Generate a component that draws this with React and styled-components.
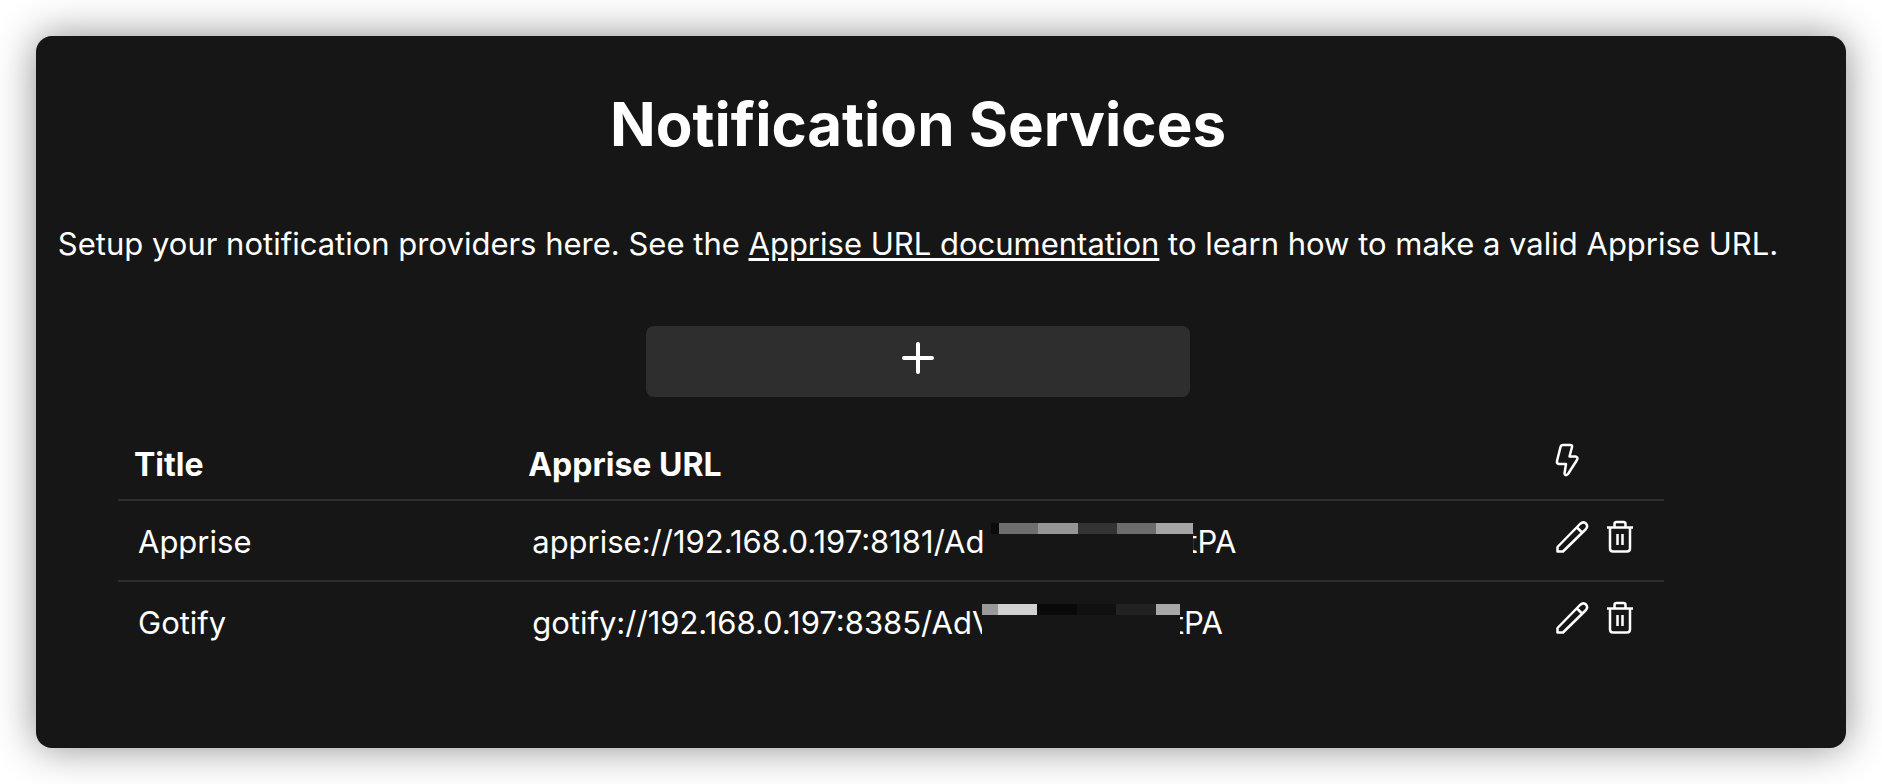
import React from "react";
import styled, { createGlobalStyle } from "styled-components";

const Global = createGlobalStyle`
  * { box-sizing: border-box; }
  body { margin: 0; background: #fff; color: #fff; font-family: Inter, "Liberation Sans", sans-serif; }
`;
const Page = styled.div`
  min-height: 100vh;
  padding: 36px;
  display: flex;
`;
const Card = styled.main`
  flex: 1;
  min-width: 0;
  background: #161616;
  border-radius: 16px;
  box-shadow: 0 0 40px rgba(0, 0, 0, 0.45);
  padding: 48px 46px 64px 0;
  display: flex;
  flex-direction: column;
  align-items: center;
`;
const Heading = styled.h1`
  margin: 0;
  font-size: 60px;
  line-height: 80px;
  font-weight: 700;
`;
const Intro = styled.p`
  margin: 60px 0 0;
  font-size: 31px;
  line-height: 40px;
  text-align: center;
`;
const DocLink = styled.a`
  color: inherit;
  text-decoration: underline;
  text-decoration-thickness: 3px;
  text-underline-offset: 3px;
`;
const AddButton = styled.button`
  margin-top: 62px;
  width: 544px;
  max-width: 100%;
  height: 71px;
  padding: 0 0 8px;
  border: 0;
  border-radius: 8px;
  background: #2e2e2e;
  color: #fff;
  display: flex;
  align-items: center;
  justify-content: center;
`;
const Table = styled.table`
  align-self: flex-start;
  margin: 27px 0 0 82px;
  width: calc(100% - 218px);
  border-collapse: collapse;
  table-layout: fixed;
  font-size: 31px;
  line-height: 40px;
  text-align: left;
`;
const Col = styled.col`
  width: ${(p) => p.$width};
`;
const Row = styled.tr`
  height: ${(p) => (p.$first ? "76px" : "81px")};
  border-top: ${(p) => (p.$first ? "0" : "2px solid #2e2e2e")};
`;
const HeadCell = styled.th`
  padding: 6px 16px 0;
  font-size: 32px;
  font-weight: 700;
  vertical-align: middle;
`;
const Cell = styled.td`
  padding: 2px 20px 0;
  vertical-align: middle;
`;
const Url = styled.span`
  display: flex;
  align-items: center;
`;
const Clipped = styled.span`
  display: flex;
  justify-content: ${(p) => p.$side};
  width: ${(p) => p.$width}px;
  overflow: hidden;
`;
const Mosaic = styled.span`
  display: flex;
  width: ${(p) => p.$width}px;
  height: 11px;
  margin-bottom: 27px;
`;
const Tile = styled.span`
  flex: ${(p) => p.$size};
  background: ${(p) => p.$tone};
`;
const Actions = styled.div`
  display: flex;
  gap: 12px;
  padding-bottom: 12px;
`;
const IconButton = styled.button`
  width: 36px;
  height: 36px;
  padding: 0;
  border: 0;
  background: none;
  color: #fff;
  display: flex;
  align-items: center;
  justify-content: center;
`;

const Icon = ({ children, width = 2.5 }) => (
  <svg width="36" height="36" viewBox="0 0 36 36" fill="none" stroke="currentColor" strokeWidth={width} strokeLinejoin="round" aria-hidden="true">
    {children}
  </svg>
);
const Plus = () => (
  <Icon width={4}><path d="M18 4V32M4 18H32" strokeLinecap="round" /></Icon>
);
const Bolt = () => (
  <Icon><path d="M13 4H20.500Q22.500 4 22 6L19.500 15.500H25.500Q28.500 16 27 19L18 33Q15 35.500 14.500 32.500L16 23H9Q6.500 22.500 7 20L10.500 6Q11 4 13 4Z" /></Icon>
);
const Pencil = () => (
  <Icon><path d="M3.500 33.500V29L26 6Q29.500 3 32 5.500Q34.500 8.500 31.500 11.500L9 33.500ZM23 9.500L28 14.500" /></Icon>
);
const Trash = () => (
  <Icon><path d="M5 9.500H31M12.500 9V6Q12.500 4 14.500 4H21.500Q23.500 4 23.500 6V9M8 9.500V30.500Q8 33.500 11 33.500H25Q28 33.500 28 30.500V9.500M15.500 16V27M20.500 16V27" /></Icon>
);

const services = [
  { title: "Apprise", url: "apprise://192.168.0.197:8181/Ad", rest: "", keep: 7, width: 202,
    tiles: [[8, "#0b0b0b"], [39, "#6e6e6e"], [40, "#959595"], [39, "#333"], [39, "#6c6c6c"], [37, "#a5a5a5"]] },
  { title: "Gotify", url: "gotify://192.168.0.197:8385/Ad", rest: "V", keep: 10, width: 198,
    tiles: [[16, "#999"], [39, "#d1d1d1"], [40, "#090909"], [39, "#101010"], [40, "#222"], [24, "#a8a8a8"]] },
];

export default function App() {
  return (
    <Page>
      <Global />
      <Card>
        <Heading>Notification Services</Heading>
        <Intro>
          Setup your notification providers here. See the <DocLink href="#docs">Apprise URL documentation</DocLink> to learn how to make a valid Apprise URL.
        </Intro>
        <AddButton type="button" aria-label="Add notification service"><Plus /></AddButton>
        <Table>
          <colgroup><Col $width="25.5%" /><Col /><Col $width="130px" /></colgroup>
          <thead>
            <Row $first>
              <HeadCell scope="col">Title</HeadCell>
              <HeadCell scope="col">Apprise URL</HeadCell>
              <HeadCell scope="col" aria-label="Actions"><Actions><Bolt /></Actions></HeadCell>
            </Row>
          </thead>
          <tbody>
            {services.map((s) => (
              <Row key={s.title}>
                <Cell>{s.title}</Cell>
                <Cell>
                  <Url>
                    <span>{s.url}</span>
                    <Clipped $side="flex-start" $width={s.keep}>{s.rest}</Clipped>
                    <Mosaic $width={s.width}>{s.tiles.map(([size, tone], i) => <Tile key={i} $size={size} $tone={tone} />)}</Mosaic>
                    <Clipped $side="flex-end" $width={4}>t</Clipped>
                    <span>PA</span>
                  </Url>
                </Cell>
                <Cell>
                  <Actions>
                    <IconButton type="button" aria-label={`Edit ${s.title}`}><Pencil /></IconButton>
                    <IconButton type="button" aria-label={`Delete ${s.title}`}><Trash /></IconButton>
                  </Actions>
                </Cell>
              </Row>
            ))}
          </tbody>
        </Table>
      </Card>
    </Page>
  );
}
